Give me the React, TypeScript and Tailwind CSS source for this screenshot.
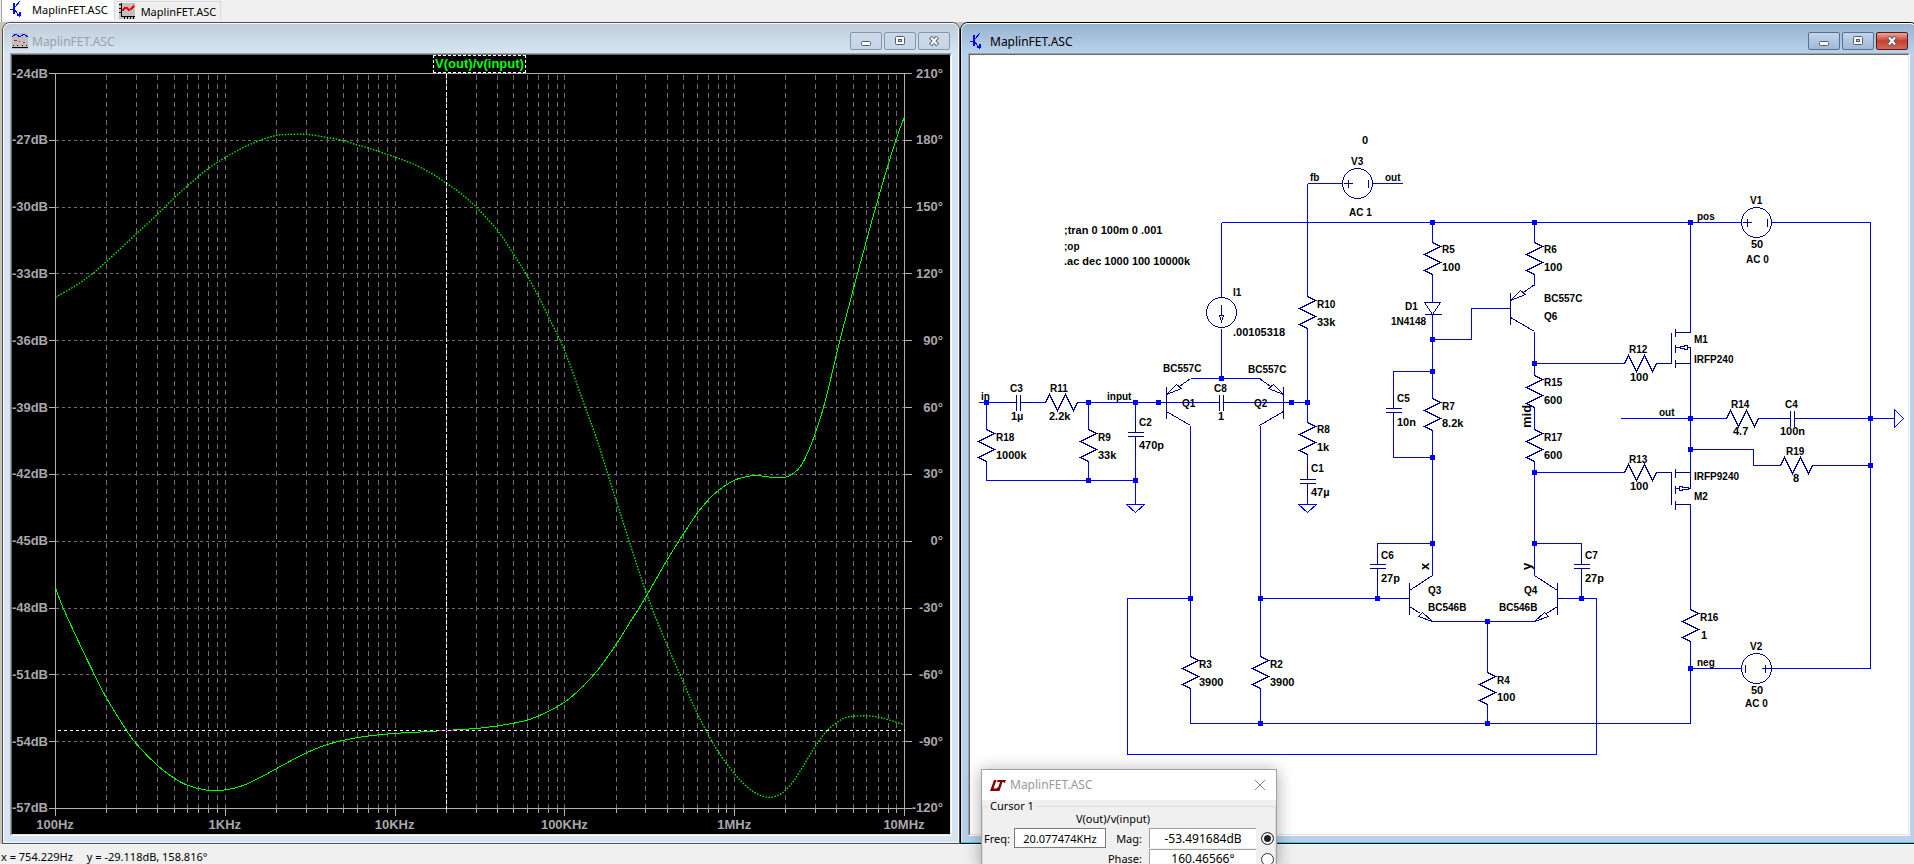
import React, { useState } from 'react';

type Point = [number, number];

const WIRE = '#0000ff';
const PART = '#00008b';

/* ---------- Icons ---------- */

const TransistorIcon = () => (
  <svg className="size-4 shrink-0" viewBox="0 0 16 16" fill="none" stroke={WIRE} shapeRendering="crispEdges">
    <path d="M0 8H3" />
    <path d="M4 2V13" strokeWidth="2" />
    <path d="M5 6L10 0M5 9L10 16" />
    <path d="M7 14H10V11" strokeWidth="2" />
  </svg>
);

const GraphIcon = () => (
  <svg className="size-4 shrink-0" viewBox="0 0 16 16" fill="none" shapeRendering="crispEdges">
    <rect width="16" height="16" fill="#c0c0c0" />
    <path d="M2.5 0V14M2 13.5H16M0 1.5H2M0 5.5H2M0 9.5H2M5.5 14V16M8.5 14V16M11.5 14V16M14.5 14V16" stroke="#000" />
    <path d="M3 8L6 5L8 5L10 7L12 6L15 3" stroke="#f00" strokeWidth="2" />
  </svg>
);

const WaveIcon = () => (
  <svg className="size-4 shrink-0" viewBox="0 0 16 16" fill="none" shapeRendering="crispEdges">
    <rect width="16" height="16" fill="#c0c0c0" />
    <path d="M0 4L4 1L8 4L12 1L16 4" stroke="#00f" />
    <path d="M2 7.5H5M7 8.5H8M11 9.5H13" stroke="#f00" />
    <path d="M0 14.5H16M1.5 12V13M5.5 12V13M10.5 12V13M14.5 12V13" stroke="#000" />
  </svg>
);

const LtIcon = () => (
  <svg className="w-4 h-[11px] shrink-0" viewBox="0 0 16 11" fill="#800000">
    <path d="M4 0H6.500L3.500 8.500H6.500L8.500 6.500L7.500 11H0Z" />
    <path d="M7.500 0H16L14.500 3.500L13.500 2H12.500L9.500 11H7L10 2H7Z" />
  </svg>
);

/* ---------- Window frame ---------- */

interface FrameProps {
  title: string;
  icon: React.ReactNode;
  active?: boolean;
  children: React.ReactNode;
}

const Frame = ({ title, icon, active = false, children }: FrameProps) => {
  const button = active
    ? 'border-[#5a6f8f] from-[#c3d5e9] to-[#9fb9d6]'
    : 'border-[#8695b0] from-[#ccd9e7] to-[#c6d5e6]';
  const close = active ? 'border-[#5c1520] from-[#e8a598] via-[#c2412d] to-[#d06a55]' : button;

  return (
    <section
      className={`flex flex-col min-w-0 min-h-0 rounded-t-lg border ${
        active ? 'bg-[#b9d1ea] border-black' : 'bg-[#d7e4f2] border-[#4d4d4d]'
      }`}
    >
      <div
        className={`flex flex-col flex-1 min-h-0 rounded-t-[7px] border ${
          active ? 'border-t-white border-x-[#d5e6f7] border-b-[#2fd0f0]' : 'border-[#f4f8fc]'
        }`}
      >
        <header
          className={`flex items-center h-[29px] shrink-0 pt-[5px] px-2 gap-1 rounded-t-md bg-gradient-to-b ${
            active ? 'from-[#99b4d1] to-[#b9d1ea]' : 'from-[#bfcddb] to-[#d7e4f2]'
          }`}
        >
          {icon}
          <h2 className={`flex-1 pt-0.5 text-xs ${active ? 'text-black' : 'text-[#98a0a8]'}`}>{title}</h2>
          <div className="flex gap-0.5">
            <button aria-label="Minimize" className={`w-8 h-[18px] flex items-center justify-center rounded-xs border bg-gradient-to-b ${button}`}>
              <svg className="w-3 h-3" viewBox="0 0 12 12">
                <rect x="1.500" y="6.500" width="9" height="4" rx="1" fill="#fff" stroke="#535a6b" />
              </svg>
            </button>
            <button aria-label="Maximize" className={`w-8 h-[18px] flex items-center justify-center rounded-xs border bg-gradient-to-b ${button}`}>
              <svg className="w-3 h-3" viewBox="0 0 12 12" stroke="#535a6b">
                <rect x="1.500" y="1.500" width="9" height="8" rx="1" fill="#fff" />
                <rect x="4.500" y="4.500" width="3" height="2" fill="#b8c8dc" />
              </svg>
            </button>
            <button aria-label="Close" className={`w-8 h-[18px] flex items-center justify-center rounded-xs border bg-gradient-to-b ${close}`}>
              <svg className="w-3 h-3" viewBox="0 0 12 12" fill="none">
                <path d="M2.500 2L9.500 10M9.500 2L2.500 10" stroke="#535a6b" strokeWidth="4" />
                <path d="M3 2.500L9 9.500M9 2.500L3 9.500" stroke="#fff" strokeWidth="2" />
              </svg>
            </button>
          </div>
        </header>
        <div className="flex flex-1 min-h-0 mx-1.5 mb-1.5 border border-t-[#a0a0a0] border-l-[#a0a0a0] border-b-white border-r-white">
          <div className="flex flex-1 min-w-0 min-h-0 border border-t-[#696969] border-l-[#696969] border-b-[#e3e3e3] border-r-[#e3e3e3] overflow-hidden">
            {children}
          </div>
        </div>
      </div>
    </section>
  );
};

/* ---------- Bode plot ---------- */

const PLOT_W = 849;
const PLOT_H = 735;

const magnitudeLabels = ['-24dB', '-27dB', '-30dB', '-33dB', '-36dB', '-39dB', '-42dB', '-45dB', '-48dB', '-51dB', '-54dB', '-57dB'];
const phaseLabels = ['210°', '180°', '150°', '120°', '90°', '60°', '30°', '0°', '-30°', '-60°', '-90°', '-120°'];
const frequencyLabels = ['100Hz', '1KHz', '10KHz', '100KHz', '1MHz', '10MHz'];

// Samples on a 1446 x 1459 grid that spans the plot area
const magnitude: Point[] = [
  [0, 1021], [13, 1061], [43, 1137], [65, 1190], [86, 1238], [121, 1304], [138, 1331], [173, 1373], [201, 1398],
  [225, 1413], [260, 1423], [289, 1422], [318, 1414], [348, 1398], [376, 1380], [428, 1348], [463, 1332], [493, 1323],
  [533, 1315], [578, 1310], [623, 1307], [666, 1304], [718, 1300], [753, 1295], [783, 1289], [808, 1282], [838, 1267],
  [868, 1247], [898, 1217], [923, 1185], [955, 1133], [978, 1090], [993, 1063], [1013, 1024], [1043, 963], [1058, 935],
  [1070, 913], [1093, 873], [1113, 845], [1131, 826], [1157, 807], [1178, 800], [1195, 798], [1223, 802], [1244, 801],
  [1258, 793], [1270, 778], [1283, 748], [1295, 711], [1308, 663], [1322, 598], [1336, 529], [1351, 463], [1366, 397],
  [1400, 253], [1431, 133], [1446, 86],
];

const phase: Point[] = [
  [0, 444], [33, 422], [60, 400], [86, 374], [138, 318], [173, 280], [202, 247], [225, 223], [260, 189], [289, 167],
  [318, 148], [348, 133], [376, 123], [395, 121], [428, 121], [463, 127], [493, 134], [514, 142], [533, 148],
  [578, 166], [608, 179], [640, 198], [666, 218], [690, 238], [717, 266], [753, 312], [781, 360], [803, 401],
  [822, 441], [840, 484], [867, 550], [903, 665], [923, 730], [955, 848], [982, 946], [1005, 1027], [1024, 1085],
  [1043, 1138], [1070, 1211], [1093, 1270], [1113, 1315], [1131, 1350], [1157, 1391], [1178, 1416], [1195, 1430],
  [1215, 1437], [1232, 1432], [1244, 1422], [1258, 1403], [1276, 1370], [1295, 1334], [1313, 1306], [1331, 1288],
  [1345, 1279], [1359, 1276], [1382, 1275], [1403, 1278], [1419, 1283], [1446, 1293],
];

// Catmull-Rom spline through the samples
const tracePath = (points: Point[]) => {
  const p = points.map(([x, y]): Point => [(x * PLOT_W) / 1446, (y * PLOT_H) / 1459]);
  let d = `M${p[0][0]} ${p[0][1]}`;
  for (let i = 0; i < p.length - 1; i++) {
    const a = p[i - 1] || p[i];
    const b = p[i];
    const c = p[i + 1];
    const e = p[i + 2] || c;
    d += `C${b[0] + (c[0] - a[0]) / 6} ${b[1] + (c[1] - a[1]) / 6} ${c[0] - (e[0] - b[0]) / 6} ${c[1] - (e[1] - b[1]) / 6} ${c[0]} ${c[1]}`;
  }
  return d;
};

const decades = [0, 1, 2, 3, 4];
const gridX = decades.flatMap(d => [1, 2, 3, 4, 5, 6, 7, 8, 9].map(n => Math.round(((d + Math.log10(n)) * PLOT_W) / 5))).slice(1);

const BodePlot = () => (
  <div className="flex-1 min-w-0 grid grid-cols-[43px_1fr_46px] grid-rows-[18px_1fr_26px] bg-black text-[#a8a8a8] text-[13px] leading-none font-bold font-['Liberation_Sans',Arial,sans-serif]">
    <div className="col-start-2 flex justify-center">
      <button className="px-px pb-0.5 border border-dashed border-white text-[#00ff00]">V(out)/v(input)</button>
    </div>

    <div className="row-start-2 col-start-1 flex flex-col justify-between items-end pr-[7px]">
      {magnitudeLabels.map(label => (
        <span key={label} className="h-0 flex items-center">{label}</span>
      ))}
    </div>

    <div className="row-start-2 col-start-2 min-h-0">
      <svg
        className="w-full h-full overflow-visible"
        viewBox={`0 0 ${PLOT_W} ${PLOT_H}`}
        preserveAspectRatio="none"
        fill="none"
        shapeRendering="crispEdges"
      >
        <g transform="translate(0.5 0.5)">
          <g stroke="#6e6e6e">
            {gridX.map(x => (
              <path key={x} d={`M${x} 1V${PLOT_H}`} strokeDasharray="5 4" />
            ))}
            {magnitudeLabels.slice(1, -1).map((label, i) => (
              <path key={label} d={`M0 ${Math.round(((i + 1) * PLOT_H) / 11)}H${PLOT_W}`} strokeDasharray="3 3" />
            ))}
          </g>
          <g stroke="#b0b0b0">
            <path d={`M0 0H${PLOT_W}V${PLOT_H}H0Z`} />
            {magnitudeLabels.map((label, i) => {
              const y = Math.round((i * PLOT_H) / 11);
              return <path key={label} d={`M-7 ${y}H0M${PLOT_W} ${y}H${PLOT_W + 7}`} />;
            })}
            {gridX.map(x => (
              <path key={x} d={`M${x} ${PLOT_H}V${PLOT_H + 4}`} />
            ))}
            {frequencyLabels.map((label, i) => (
              <path key={label} d={`M${Math.round((i * PLOT_W) / 5)} ${PLOT_H}V${PLOT_H + 7}`} />
            ))}
          </g>
          <path d={tracePath(magnitude)} stroke="#00ff00" />
          <path d={tracePath(phase)} stroke="#00ff00" strokeWidth="1.3" strokeDasharray="1.5 1.5" shapeRendering="geometricPrecision" />
          <g stroke="#fff" strokeDasharray="4 2">
            <path d={`M391 0V${PLOT_H}`} />
            <path d={`M2 657H${PLOT_W}`} strokeDasharray="3 3" />
          </g>
          <path d="M383 657H399" stroke="#d000d0" strokeDasharray="3 3" />
        </g>
      </svg>
    </div>

    <div className="row-start-2 col-start-3 flex flex-col justify-between items-end pr-[7px]">
      {phaseLabels.map(label => (
        <span key={label} className="h-0 flex items-center">{label}</span>
      ))}
    </div>

    <div className="row-start-3 col-start-2 flex justify-between items-center pt-1.5">
      {frequencyLabels.map(label => (
        <span key={label} className="w-0 flex justify-center">{label}</span>
      ))}
    </div>
  </div>
);

/* ---------- Schematic ---------- */

const Resistor = ({ x, y, flat = false }: { x: number; y: number; flat?: boolean }) => (
  <path transform={`translate(${x} ${y})${flat ? ' rotate(-90)' : ''}`} d="M0 -3V0L8 4L-8 12L8 20L-8 28L0 32V35" />
);

const Capacitor = ({ x, y, flat = false }: { x: number; y: number; flat?: boolean }) => (
  <path transform={`translate(${x} ${y})${flat ? ' rotate(-90)' : ''}`} d="M0 -12V0M-8 0H8M-8 4H8M0 4V16" />
);

const Pnp = ({ x, y, flip = false }: { x: number; y: number; flip?: boolean }) => (
  <path
    transform={`translate(${x} ${y})${flip ? ' scale(-1 1)' : ''}`}
    d="M-8 0H0M0 -16V16M24 -24L13 -16M0 -8L10 -18L15 -14ZM0 9L24 23"
  />
);

const Npn = ({ x, y, flip = false }: { x: number; y: number; flip?: boolean }) => (
  <path
    transform={`translate(${x} ${y})${flip ? ' scale(-1 1)' : ''}`}
    d="M-8 0H0M0 -16V16M23 -23L0 -8M0 8L11 15M23 23L13 14L9 18Z"
  />
);

const Source = ({ x, y, flip = false }: { x: number; y: number; flip?: boolean }) => (
  <g transform={`translate(${x} ${y})${flip ? ' rotate(180)' : ''}`}>
    <circle r="15" />
    <path d="M-20 0H-15M15 0H20M-14 0H-5M-9 -4V4M11 -4V4" />
  </g>
);

const wires = [
  // input network
  'M978 402H1004M1032 402H1045M1077 402H1158M986 402V429M986 461V480H1135M1088 402V429M1088 461V480',
  'M1135 402V420M1135 448V504',
  // differential pair
  'M1166 402H1207M1235 402H1283M1291 402H1307M1190 378H1260M1221 222V296M1221 328V378M1221 222H1741',
  'M1190 425V656M1190 688V723H1690V641M1260 425V656M1260 688V723',
  'M1307 183H1342M1373 183H1402M1307 183V296M1307 328V422M1307 454V467M1307 495V504',
  // voltage amplifier
  'M1432 222V242M1432 274V302M1432 314V398M1432 430V575M1432 339H1471V308H1503M1432 371H1393V396M1393 424V457H1432',
  'M1534 222V242M1534 274V285M1534 331V375M1534 407V429M1534 461V575M1534 363H1624M1534 472H1624',
  'M1260 598H1401M1377 598V580M1377 552V543H1432M1534 543H1581V552M1581 580V598M1565 598H1596V754H1127V598H1190',
  'M1432 621H1535M1487 621V672M1487 704V723',
  // output stage
  'M1690 222V332M1690 363V472M1690 504V609M1772 222H1870V668H1772M1690 668H1741',
  'M1620 418H1726M1758 418H1778M1806 418H1894M1690 449H1753V465H1780M1812 465H1870M1656 363H1660M1656 472H1660',
];

const grounds = [
  'M1126 504H1144L1135 512Z',
  'M1298 504H1316L1307 512Z',
  'M1894 409V427L1903 418Z',
];

const junctions: Point[] = [
  [986, 402], [1088, 402], [1135, 402], [1158, 402], [1291, 402], [1307, 402], [1088, 480], [1135, 480], [1221, 378],
  [1432, 222], [1534, 222], [1690, 222], [1432, 339], [1432, 371], [1432, 457], [1534, 363], [1534, 472],
  [1432, 543], [1534, 543], [1377, 598], [1581, 598], [1190, 598], [1260, 598], [1487, 621], [1487, 723], [1260, 723],
  [1690, 418], [1690, 449], [1870, 418], [1870, 465], [1690, 668],
];

// [text, x, baseline] for reference designators, models and net names
const names: [string, number, number][] = [
  ['in', 981, 400], ['C3', 1010, 392], ['R11', 1050, 392], ['input', 1107, 400], ['BC557C', 1163, 372],
  ['Q1', 1182, 407], ['C8', 1214, 392], ['BC557C', 1248, 373], ['Q2', 1254, 407], ['R18', 996, 441],
  ['R9', 1098, 441], ['C2', 1139, 426], ['R8', 1317, 433], ['C1', 1311, 472], ['V3', 1351, 165],
  ['fb', 1310, 181], ['out', 1385, 181], ['AC 1', 1349, 216], [';op', 1064, 250], ['I1', 1233, 296],
  ['R10', 1317, 308], ['D1', 1405, 310], ['1N4148', 1391, 325], ['R5', 1442, 253], ['R6', 1544, 253],
  ['BC557C', 1544, 302], ['Q6', 1544, 320], ['R12', 1629, 353], ['R15', 1544, 386], ['R17', 1544, 441],
  ['C5', 1397, 402], ['R7', 1442, 410], ['V1', 1750, 204], ['AC 0', 1746, 263], ['pos', 1697, 220],
  ['M1', 1694, 343], ['IRFP240', 1694, 363], ['out', 1659, 416], ['R14', 1731, 408], ['C4', 1785, 408],
  ['R19', 1786, 455], ['R13', 1629, 463], ['IRFP9240', 1694, 480], ['M2', 1694, 500], ['C6', 1381, 559],
  ['Q3', 1428, 594], ['BC546B', 1428, 611], ['Q4', 1524, 594], ['BC546B', 1499, 611], ['C7', 1585, 559],
  ['R4', 1497, 684], ['R16', 1700, 621], ['V2', 1750, 650], ['neg', 1697, 666], ['AC 0', 1745, 707],
  ['R3', 1199, 668], ['R2', 1270, 668],
];

const values: [string, number, number][] = [
  ['1µ', 1011, 420], ['2.2k', 1049, 420], ['1', 1218, 420], ['1000k', 996, 459], ['33k', 1098, 459],
  ['470p', 1139, 449], ['1k', 1317, 451], ['47µ', 1311, 496], ['0', 1362, 144], [';tran 0 100m 0 .001', 1064, 234],
  ['.ac dec 1000 100 10000k', 1064, 265], ['.00105318', 1233, 336], ['33k', 1317, 326], ['100', 1442, 271],
  ['100', 1544, 271], ['100', 1630, 381], ['600', 1544, 404], ['600', 1544, 459], ['10n', 1397, 426],
  ['8.2k', 1442, 427], ['50', 1751, 248], ['4.7', 1733, 435], ['100n', 1780, 435], ['8', 1793, 482],
  ['100', 1630, 490], ['27p', 1381, 582], ['27p', 1585, 582], ['100', 1497, 701], ['1', 1701, 639],
  ['50', 1751, 694], ['3900', 1199, 686], ['3900', 1270, 686],
];

const verticalNets: [string, number, number][] = [
  ['mid', 1531, 428], ['x', 1429, 570], ['y', 1531, 570],
];

const Schematic = () => (
  <div className="flex-1 min-w-0 bg-white overflow-hidden">
    <svg className="w-[938px] h-[779px] max-w-none" viewBox="970 55 938 779" fill="none">
      <g transform="translate(0.5 0.5)" shapeRendering="crispEdges">
        <g stroke={PART}>
          <Resistor x={986} y={429} />
          <Resistor x={1088} y={429} />
          <Resistor x={1045} y={402} flat />
          <Resistor x={1307} y={422} />
          <Resistor x={1307} y={296} />
          <Resistor x={1190} y={656} />
          <Resistor x={1260} y={656} />
          <Resistor x={1432} y={242} />
          <Resistor x={1432} y={398} />
          <Resistor x={1534} y={242} />
          <Resistor x={1534} y={375} />
          <Resistor x={1534} y={429} />
          <Resistor x={1487} y={672} />
          <Resistor x={1690} y={609} />
          <Resistor x={1624} y={363} flat />
          <Resistor x={1624} y={472} flat />
          <Resistor x={1726} y={418} flat />
          <Resistor x={1780} y={465} flat />

          <Capacitor x={1016} y={402} flat />
          <Capacitor x={1219} y={402} flat />
          <Capacitor x={1790} y={418} flat />
          <Capacitor x={1135} y={432} />
          <Capacitor x={1307} y={479} />
          <Capacitor x={1393} y={408} />
          <Capacitor x={1377} y={564} />
          <Capacitor x={1581} y={564} />

          <Pnp x={1166} y={402} />
          <Pnp x={1283} y={402} flip />
          <Pnp x={1510} y={308} />
          <Npn x={1409} y={598} />
          <Npn x={1557} y={598} flip />

          <Source x={1357} y={183} />
          <Source x={1756} y={222} />
          <Source x={1756} y={668} flip />
          <circle cx="1221" cy="312" r="15" />
          <path d="M1221 304V315M1219 315H1223L1221 321Z" />

          {/* D1 */}
          <path d="M1424 302H1440L1432 314ZM1424 314H1441" />
          {/* M1 and M2 */}
          <path d="M1660 363H1671V332M1675 328V336M1675 344V352M1675 359V367M1675 332H1690M1675 363H1690V347H1687M1675 347H1679L1681 346H1684V345H1687V349H1684V348H1681L1679 347" />
          <path d="M1660 472H1671V504M1675 468V477M1675 485V493M1675 500V509M1675 472H1690V488H1688M1675 504H1690M1675 488H1679V486H1682V487H1687L1689 488L1687 489H1682V490H1679V488" />
        </g>

        <g stroke={WIRE}>
          {wires.map(d => (
            <path key={d} d={d} />
          ))}
          {grounds.map(d => (
            <path key={d} d={d} />
          ))}
        </g>
      </g>

      <g fill={WIRE}>
        {junctions.map(([x, y]) => (
          <rect key={`${x}-${y}`} x={x - 2} y={y - 2} width="5" height="5" />
        ))}
      </g>

      <g className="fill-black font-bold font-['Liberation_Sans',Arial,sans-serif]">
        {names.map(([text, x, y]) => (
          <text key={`${x}-${y}`} x={x} y={y} className="text-[10px]">{text}</text>
        ))}
        {values.map(([text, x, y]) => (
          <text key={`${x}-${y}`} x={x} y={y} className="text-[11px]">{text}</text>
        ))}
        {verticalNets.map(([text, x, y]) => (
          <text key={text} transform={`translate(${x} ${y}) rotate(-90)`} className="text-[13px]">{text}</text>
        ))}
      </g>
    </svg>
  </div>
);

/* ---------- Cursor dialog ---------- */

const CursorDialog = () => {
  const [readout, setReadout] = useState('mag');
  const radio =
    'appearance-none size-[13px] ml-[5px] shrink-0 rounded-full border border-[#333] bg-white checked:bg-[#222] checked:shadow-[inset_0_0_0_2px_white]';

  return (
    <div
      role="dialog"
      aria-label="Cursor readout"
      className="absolute left-[981px] top-[769px] w-[296px] border border-[#a0a0a0] bg-[#f0f0f0] text-[11px] leading-none text-black shadow-[0_2px_16px_rgba(0,0,0,0.35)]"
    >
      <header className="flex items-center h-[30px] pl-2 pr-2.5 gap-1 bg-white">
        <LtIcon />
        <h2 className="flex-1 text-xs text-[#999]">MaplinFET.ASC</h2>
        <button aria-label="Close" className="size-3">
          <svg viewBox="0 0 12 12" fill="none" stroke="#888">
            <path d="M1 1L11 11M11 1L1 11" />
          </svg>
        </button>
      </header>

      <fieldset className="border border-[#dcdcdc] px-px">
        <legend className="ml-1 px-0.5 h-3">Cursor 1</legend>
        <p className="flex items-center justify-center h-3 pr-8">V(out)/v(input)</p>
        <div className="flex items-center mt-1">
          <label htmlFor="freq" className="w-[30px]">Freq:</label>
          <input id="freq" defaultValue="20.077474KHz" className="w-[92px] h-5 border border-[#7a7a7a] bg-white text-center" />
          <label htmlFor="mag" className="w-9 text-right">Mag:</label>
          <input id="mag" defaultValue="-53.491684dB" className="w-[107px] h-5 ml-[7px] border-t border-l border-[#a0a0a0] bg-white text-center text-xs" />
          <input type="radio" name="readout" aria-label="Magnitude" checked={readout === 'mag'} onChange={() => setReadout('mag')} className={radio} />
        </div>
        <div className="flex items-start mt-px">
          <label htmlFor="phase" className="w-[158px] pt-1 text-right">Phase:</label>
          <input id="phase" defaultValue="160.46566°" className="w-[107px] h-[18px] ml-[7px] border-t border-l border-[#a0a0a0] bg-white text-center text-xs leading-none" />
          <input type="radio" name="readout" aria-label="Phase" checked={readout === 'phase'} onChange={() => setReadout('phase')} className={`mt-1 ${radio}`} />
        </div>
      </fieldset>
    </div>
  );
};

export default function App() {
  const [tab, setTab] = useState(0);
  const tabs = [
    { title: 'MaplinFET.ASC', icon: <TransistorIcon /> },
    { title: 'MaplinFET.ASC', icon: <GraphIcon /> },
  ];

  return (
    <div className="relative h-screen flex flex-col overflow-hidden bg-[#f0f0f0] text-black font-['Noto_Sans','Open_Sans',sans-serif]">
      <nav className="flex items-end h-[22px] shrink-0 ml-px pb-0.5 border-l border-[#a0a0a0] text-[11px] leading-none">
        {tabs.map((t, i) => (
          <button
            key={i}
            onClick={() => setTab(i)}
            className={`flex items-center gap-1.5 ${
              i === tab ? 'h-5 pl-2 pr-1.5 pb-0.5 bg-white' : 'h-[19px] px-1 border border-b-0 border-[#d9d9d9]'
            }`}
          >
            {t.icon}
            {t.title}
          </button>
        ))}
      </nav>

      <main className="flex-1 min-h-0 grid grid-cols-2 grid-rows-1 pl-0.5 -mr-1 bg-[#c8c4b8]">
        <Frame title="MaplinFET.ASC" icon={<WaveIcon />}>
          <BodePlot />
        </Frame>
        <Frame title="MaplinFET.ASC" icon={<TransistorIcon />} active>
          <Schematic />
        </Frame>
      </main>

      <footer className="flex items-center h-5 shrink-0 gap-3.5 px-px pt-1 border-t border-[#fafafa] text-[11px] leading-none">
        <span>x = 754.229Hz</span>
        <span>y = -29.118dB, 158.816°</span>
      </footer>

      <CursorDialog />
    </div>
  );
}
